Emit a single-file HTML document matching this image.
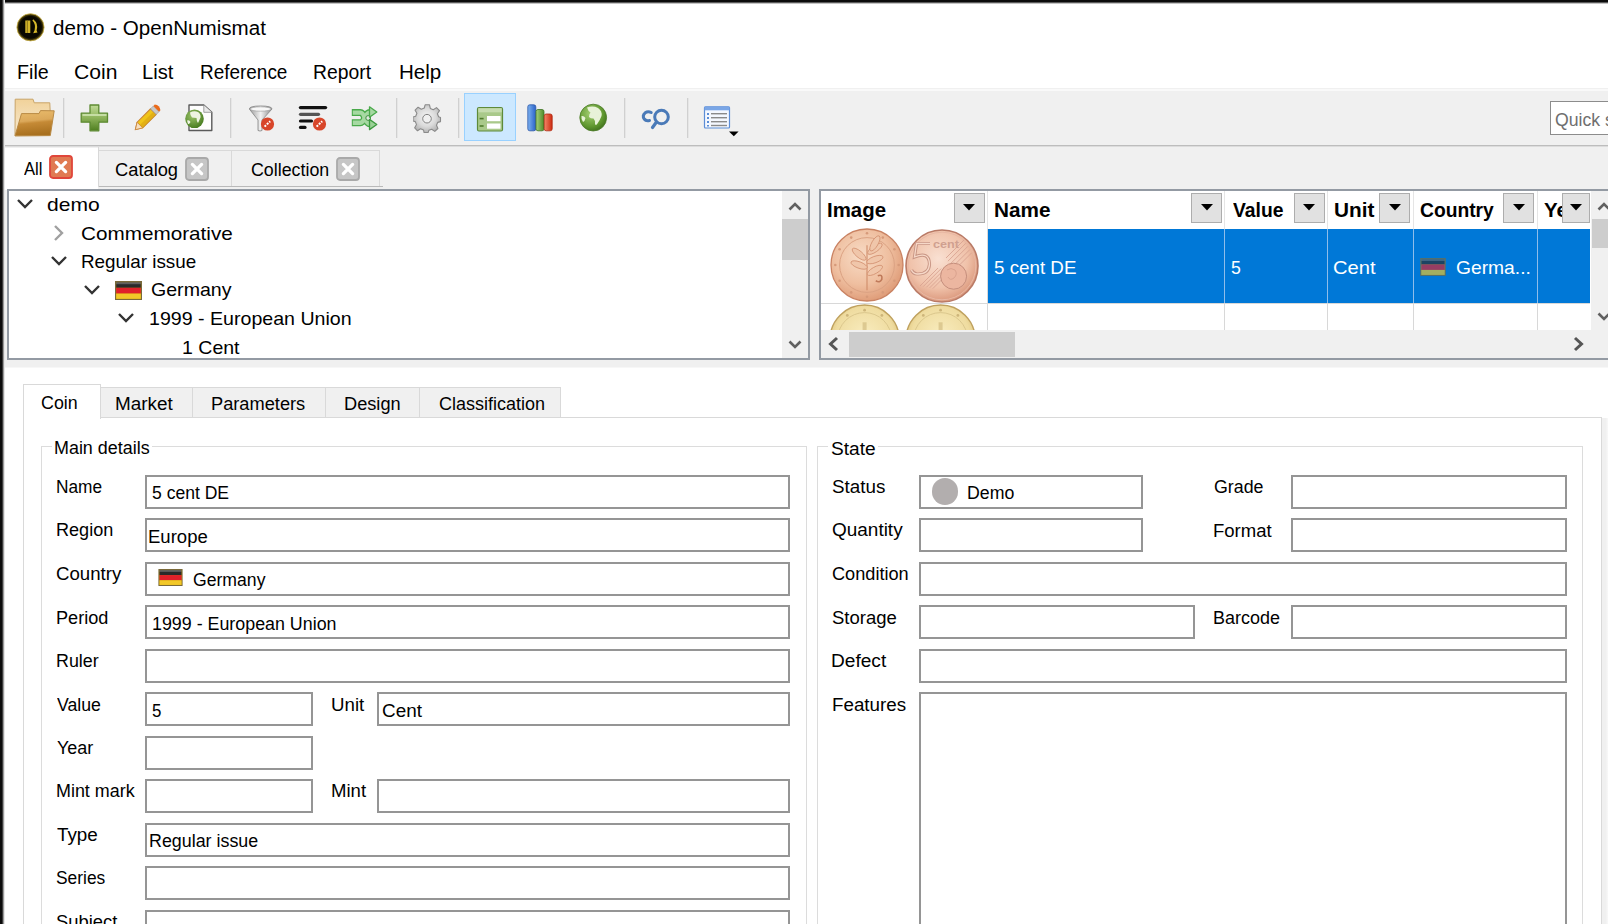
<!DOCTYPE html><html><head><meta charset="utf-8"><title>demo - OpenNumismat</title><style>
html,body{margin:0;padding:0;}body{width:1608px;height:924px;position:relative;overflow:hidden;background:#fff;font-family:"Liberation Sans",sans-serif;}
.t{position:absolute;white-space:nowrap;line-height:normal;transform-origin:0 0;}
</style></head><body>
<div style="position:absolute;left:0px;top:0px;width:1608px;height:88px;background:#fff"></div>
<div style="position:absolute;left:0px;top:88px;width:1608px;height:1px;background:#f0f0f0"></div>
<div style="position:absolute;left:0px;top:89px;width:1608px;height:2px;background:#f9f9f9"></div>
<div style="position:absolute;left:0px;top:91px;width:1608px;height:54px;background:#f0f0f0"></div>
<div style="position:absolute;left:0px;top:145px;width:1608px;height:1px;background:#bdbdbd"></div>
<div style="position:absolute;left:0px;top:146px;width:1608px;height:1px;background:#dcdcdc"></div>
<div style="position:absolute;left:0px;top:147px;width:1608px;height:221px;background:#f0f0f0"></div>
<div style="position:absolute;left:0px;top:367px;width:1608px;height:1px;background:#f7f7f7"></div>
<div style="position:absolute;left:0px;top:368px;width:1608px;height:556px;background:#fff"></div>
<svg style="position:absolute;left:16px;top:13px" width="29" height="29" viewBox="0 0 29 29">
<defs><radialGradient id="lg" cx="50%" cy="50%" r="50%"><stop offset="80%" stop-color="#0a0800"/><stop offset="100%" stop-color="#6b5a10"/></radialGradient></defs>
<circle cx="14.5" cy="14.3" r="13.6" fill="url(#lg)" stroke="#c9b04a" stroke-width="0.8"/>
<rect x="9.3" y="7.5" width="5" height="12.5" fill="#d4b62a"/>
<rect x="10.8" y="7.5" width="1" height="12.5" fill="#8a7418"/>
<path d="M17.2 6.2 Q22.8 10.5 20.6 17.4 L21.5 19.6 L17.2 20.2 L18.6 17.2 Q20 11 16.4 7.4 Z" fill="#d4b62a"/>
</svg>
<div style="position:absolute;left:63px;top:98px;width:1px;height:40px;background:#d0d0d0"></div>
<div style="position:absolute;left:64px;top:98px;width:1px;height:40px;background:#e6e6e6"></div>
<div style="position:absolute;left:230px;top:98px;width:1px;height:40px;background:#d0d0d0"></div>
<div style="position:absolute;left:231px;top:98px;width:1px;height:40px;background:#e6e6e6"></div>
<div style="position:absolute;left:396px;top:98px;width:1px;height:40px;background:#d0d0d0"></div>
<div style="position:absolute;left:397px;top:98px;width:1px;height:40px;background:#e6e6e6"></div>
<div style="position:absolute;left:458px;top:98px;width:1px;height:40px;background:#d0d0d0"></div>
<div style="position:absolute;left:459px;top:98px;width:1px;height:40px;background:#e6e6e6"></div>
<div style="position:absolute;left:624px;top:98px;width:1px;height:40px;background:#d0d0d0"></div>
<div style="position:absolute;left:625px;top:98px;width:1px;height:40px;background:#e6e6e6"></div>
<div style="position:absolute;left:687px;top:98px;width:1px;height:40px;background:#d0d0d0"></div>
<div style="position:absolute;left:688px;top:98px;width:1px;height:40px;background:#e6e6e6"></div>
<div style="position:absolute;left:464px;top:93px;width:52px;height:48px;background:#cce8ff;border:1px solid #99d1ff;box-sizing:border-box"></div>
<svg style="position:absolute;left:12px;top:95px" width="44" height="44" viewBox="0 0 44 44">
<defs>
<linearGradient id="fb" x1="0" y1="0" x2="0" y2="1"><stop offset="0" stop-color="#f1d29a"/><stop offset="1" stop-color="#f7ead2"/></linearGradient>
<linearGradient id="ff" x1="0" y1="0" x2="0.15" y2="1"><stop offset="0" stop-color="#eabc6c"/><stop offset="0.45" stop-color="#dba85a"/><stop offset="0.55" stop-color="#c58a36"/><stop offset="1" stop-color="#a8701f"/></linearGradient>
</defs>
<path d="M3.2 4.2 L21 4.2 L22.2 7.8 L37.8 7.8 L38.3 19 L37 40.5 L3 40.8 Z" fill="url(#fb)" stroke="#c9a468" stroke-width="1"/>
<path d="M9.5 18.6 L27 18.6 L28.5 15.6 L42.2 15.8 L38.3 40.6 L3 40.8 Z" fill="url(#ff)" stroke="#b98a45" stroke-width="1"/>
</svg>
<svg style="position:absolute;left:80px;top:104px" width="29" height="28" viewBox="0 0 29 28">
<defs><linearGradient id="pg" x1="0" y1="0" x2="0" y2="1"><stop offset="0" stop-color="#c1dc98"/><stop offset="0.5" stop-color="#8db35a"/><stop offset="1" stop-color="#4f7f20"/></linearGradient></defs>
<path d="M10 1 L18.8 1 L18.8 9.2 L27.5 9.2 L27.5 18.2 L18.8 18.2 L18.8 26.8 L10 26.8 L10 18.2 L1.2 18.2 L1.2 9.2 L10 9.2 Z" fill="url(#pg)" stroke="#5d8a32" stroke-width="1.3" stroke-linejoin="round"/>
<rect x="2.5" y="10" width="24" height="2" fill="#d9ebbd" opacity="0.7"/>
</svg>
<svg style="position:absolute;left:130px;top:102px" width="34" height="32" viewBox="0 0 34 32">
<g transform="rotate(-45 17 16)">
<path d="M0.5 16 L7 12 L26 12 L26 20 L7 20 Z" fill="#f0c419" stroke="#c9833a" stroke-width="1"/>
<path d="M0.5 16 L7 12 L7 20 Z" fill="#f6dfc0" stroke="#c9833a" stroke-width="0.8"/>
<rect x="7" y="16" width="19" height="4" fill="#d9a410" opacity="0.6"/>
<rect x="26" y="12" width="4" height="8" fill="#c8c8c8" stroke="#9a9a9a" stroke-width="0.6"/>
<path d="M30 12 L32 12 Q35 16 32 20 L30 20 Z" fill="#ea6a1a"/>
</g></svg>
<svg style="position:absolute;left:183px;top:102px" width="32" height="31" viewBox="0 0 32 31">
<defs><radialGradient id="gg" cx="40%" cy="35%" r="65%"><stop offset="0" stop-color="#9cc46a"/><stop offset="1" stop-color="#4a7e22"/></radialGradient></defs>
<path d="M6 3 L20.8 3 L28.8 10.3 L28.8 28.5 L6 28.5 Z" fill="#fdfdfd" stroke="#5a5a5a" stroke-width="1.4" stroke-linejoin="round"/>
<path d="M20.8 3 L20.8 10.3 L28.8 10.3" fill="#e8e8e8" stroke="#8a8a8a" stroke-width="0.8"/>
<circle cx="11.5" cy="16.8" r="9.3" fill="url(#gg)"/>
<path d="M7 10.5 Q11 8.5 15 10 Q18 12 17.5 15.5 Q16 19 15 21 Q13.5 19 13.5 16 Q11 15.5 9 15.5 Q7 13 7 10.5 Z" fill="#eef4e2"/>
<path d="M4 18.5 Q6.5 17.5 7.5 20 Q6.5 22.5 5 22 Z" fill="#eef4e2"/>
</svg>
<svg style="position:absolute;left:246px;top:103px" width="32" height="32" viewBox="0 0 32 32">
<defs><linearGradient id="fn" x1="0" y1="0" x2="1" y2="0"><stop offset="0" stop-color="#9a9a9a"/><stop offset="0.5" stop-color="#f2f2f2"/><stop offset="1" stop-color="#8a8a8a"/></linearGradient></defs>
<path d="M3.3 6 Q3.3 3 14.6 3 Q26 3 26 6 L16 17 L16 27.5 Q14 28.5 12 27.5 L12 17 Z" fill="url(#fn)" stroke="#8c8c8c" stroke-width="0.9"/>
<ellipse cx="14.6" cy="6" rx="10.5" ry="2.2" fill="#f8f8f8" stroke="#a0a0a0" stroke-width="0.7"/>
<circle cx="21.5" cy="21" r="6.6" fill="#d8462a"/>
<path d="M18.6 23.6 L24.2 18.2" stroke="#fff" stroke-width="2" stroke-dasharray="2 1.2"/>
</svg>
<svg style="position:absolute;left:296px;top:103px" width="34" height="32" viewBox="0 0 34 32">
<path d="M4.5 4.6 L29.5 4.6" stroke="#111" stroke-width="3.4" stroke-linecap="round"/>
<path d="M4.5 11.3 L22.5 11.3" stroke="#555" stroke-width="3.2" stroke-linecap="round"/>
<path d="M4.5 18 L15.5 18" stroke="#111" stroke-width="3.2" stroke-linecap="round"/>
<path d="M4.5 24.4 L9 24.4" stroke="#111" stroke-width="3.2" stroke-linecap="round"/>
<circle cx="23.5" cy="21" r="6.6" fill="#d8462a"/>
<path d="M20.6 23.6 L26.2 18.2" stroke="#fff" stroke-width="2" stroke-dasharray="2 1.2"/>
</svg>
<svg style="position:absolute;left:349px;top:103px" width="32" height="30" viewBox="0 0 32 30">
<g fill="none" stroke-linecap="butt">
<path d="M2.8 9.6 L11.5 9.6 C16 9.6 16 20.8 20.5 20.8 L22 20.8" stroke="#49a94a" stroke-width="7"/>
<path d="M2.8 19.8 L11.5 19.8 C16 19.8 16 9.6 20.5 9.6 L22 9.6" stroke="#49a94a" stroke-width="7"/>
<path d="M3.8 9.6 L11.5 9.6 C16 9.6 16 20.8 20.5 20.8 L22 20.8" stroke="#a6d9a2" stroke-width="4.4"/>
<path d="M3.8 19.8 L11.5 19.8 C16 19.8 16 9.6 20.5 9.6 L22 9.6" stroke="#a6d9a2" stroke-width="4.4"/>
</g>
<circle cx="19.2" cy="15" r="2.4" fill="#dfe8df" stroke="#3f8f3f" stroke-width="1"/>
<path d="M20.5 3.8 L27.8 9 L20.5 14.2 Z" fill="#a6d9a2" stroke="#49a94a" stroke-width="1.3" stroke-linejoin="round"/>
<path d="M20.5 16.4 L27.8 21.5 L20.5 26.6 Z" fill="#9ad196" stroke="#3d9a40" stroke-width="1.3" stroke-linejoin="round"/>
</svg>
<svg style="position:absolute;left:413px;top:104px" width="29" height="29" viewBox="0 0 29 29">
<defs><radialGradient id="gr" cx="50%" cy="45%" r="55%"><stop offset="0" stop-color="#f6f6f6"/><stop offset="0.6" stop-color="#dadada"/><stop offset="1" stop-color="#b4b4b4"/></radialGradient></defs>
<g transform="translate(14.3 14)">
<path d="M-2.2 -13.2 L2.2 -13.2 L3 -9.6 L6 -8.3 L9.2 -10.4 L12.2 -7.4 L10.1 -4.2 L11.3 -1.2 L13.2 -0.6 L13.2 3.6 L10.4 4.4 L9.2 7.3 L10.6 10.5 L7.5 13.4 L4.4 11.2 L1.6 12.3 L0.8 14.6 L-3.2 14.6 L-3.8 12 L-6.8 10.8 L-9.8 12.8 L-12.6 9.8 L-10.8 6.6 L-12 3.6 L-14.4 3 L-14.4 -1 L-11.6 -1.8 L-10.4 -4.8 L-12.2 -7.8 L-9.2 -10.8 L-6 -8.8 L-3 -10 Z" fill="url(#gr)" stroke="#8a8a8a" stroke-width="1.1" stroke-linejoin="round"/>
<circle cx="-0.3" cy="0.7" r="4.3" fill="#f0f0f0" stroke="#777" stroke-width="0.9"/>
</g></svg>
<svg style="position:absolute;left:476px;top:106px" width="28" height="27" viewBox="0 0 28 27">
<rect x="1.5" y="1.5" width="25" height="23.5" rx="1.5" fill="#a9c98a" stroke="#5e8a3a" stroke-width="1.2"/>
<rect x="2.3" y="2.3" width="23.4" height="4" fill="#c6dcaf"/>
<rect x="11" y="10" width="13.5" height="5.2" fill="#fff"/>
<rect x="11" y="17.5" width="13.5" height="5.2" fill="#fff"/>
<rect x="3.6" y="11.8" width="4" height="1.6" fill="#4e7a2c"/>
<rect x="3.6" y="19.2" width="4" height="1.6" fill="#4e7a2c"/>
</svg>
<svg style="position:absolute;left:526px;top:103px" width="30" height="30" viewBox="0 0 30 30">
<defs>
<linearGradient id="b1" x1="0" x2="1"><stop offset="0" stop-color="#7db2f0"/><stop offset="1" stop-color="#2a62c8"/></linearGradient>
<linearGradient id="b2" x1="0" x2="1"><stop offset="0" stop-color="#a8d27a"/><stop offset="1" stop-color="#4e8a2a"/></linearGradient>
<linearGradient id="b3" x1="0" x2="1"><stop offset="0" stop-color="#f4876a"/><stop offset="1" stop-color="#cc2a10"/></linearGradient>
</defs>
<rect x="1.8" y="1.8" width="8" height="26" rx="2" fill="url(#b1)" stroke="#2a56a8" stroke-width="0.8"/>
<rect x="10" y="6.5" width="8" height="21.3" rx="2" fill="url(#b2)" stroke="#3e7422" stroke-width="0.8"/>
<rect x="18.2" y="11" width="8" height="16.8" rx="2" fill="url(#b3)" stroke="#b02a10" stroke-width="0.8"/>
</svg>
<svg style="position:absolute;left:578px;top:103px" width="30" height="30" viewBox="0 0 30 30">
<defs><radialGradient id="gl" cx="40%" cy="35%" r="70%"><stop offset="0" stop-color="#a4cf72"/><stop offset="0.7" stop-color="#5e962e"/><stop offset="1" stop-color="#3f6f1c"/></radialGradient></defs>
<circle cx="15.2" cy="14.6" r="13.4" fill="url(#gl)" stroke="#4a7a26" stroke-width="0.8"/>
<path d="M9 4.5 Q15 2.5 20 5 Q24.5 8 23.5 13 Q22 17 19.5 20.5 Q18 23 17 21 Q17.5 17.5 15.5 15.5 Q12.5 15.5 11 14 Q11 11 12.5 9.5 Q10 8 9 4.5 Z" fill="#e8f2d8"/>
<path d="M3.5 13 Q6 12.5 7.5 15 Q7 18 5 19 Q3 16.5 3.5 13 Z" fill="#e8f2d8"/>
</svg>
<svg style="position:absolute;left:640px;top:106px" width="32" height="26" viewBox="0 0 32 26">
<path d="M11.2 6.5 Q8 4.8 5.2 6.8 Q2 9.5 4.2 13 Q6 15.5 9.5 14.5" fill="none" stroke="#4a7ab8" stroke-width="3" stroke-linecap="round"/>
<circle cx="21.5" cy="11" r="6.8" fill="none" stroke="#4a7ab8" stroke-width="3"/>
<path d="M16.5 16 L12.5 21.5" stroke="#4a7ab8" stroke-width="3.2" stroke-linecap="round"/>
</svg>
<svg style="position:absolute;left:702px;top:104px" width="40" height="34" viewBox="0 0 40 34">
<rect x="2.5" y="2.8" width="25" height="21.2" rx="1" fill="#f4f8ff" stroke="#5b8dd6" stroke-width="1.2"/>
<rect x="2.5" y="2.8" width="25" height="3.5" fill="#7aa6e6"/>
<g fill="#5b8dd6"><rect x="5" y="9" width="2" height="2"/><rect x="5" y="13" width="2" height="2"/><rect x="5" y="17" width="2" height="2"/><rect x="5" y="21" width="2" height="1.5"/></g>
<g fill="#8a8a8a"><rect x="9" y="9" width="16" height="1.4"/><rect x="9" y="13" width="16" height="1.4"/><rect x="9" y="17" width="16" height="1.4"/><rect x="9" y="20.8" width="16" height="1.4"/></g>
<path d="M27 27.6 L36.6 27.6 L31.8 32.3 Z" fill="#000"/>
</svg>
<div style="position:absolute;left:1550px;top:101px;width:70px;height:34px;background:#fff;border:1.5px solid #8c8c8c;box-sizing:border-box"></div>
<div style="position:absolute;left:4px;top:148px;width:94px;height:42px;background:#fff"></div>
<div style="position:absolute;left:98px;top:147px;width:1px;height:40px;background:#d8d8d8"></div>
<div style="position:absolute;left:99px;top:151px;width:133px;height:35px;background:#f0f0f0"></div>
<div style="position:absolute;left:99px;top:150px;width:281px;height:1px;background:#d9d9d9"></div>
<div style="position:absolute;left:231px;top:151px;width:1px;height:35px;background:#d9d9d9"></div>
<div style="position:absolute;left:379px;top:151px;width:1px;height:35px;background:#d9d9d9"></div>
<div style="position:absolute;left:99px;top:186px;width:284px;height:1px;background:#b9b9b9"></div>
<div style="position:absolute;left:232px;top:151px;width:147px;height:35px;background:#f0f0f0"></div>
<svg style="position:absolute;left:49px;top:155px" width="24" height="24" viewBox="0 0 24 24">
<rect x="1" y="1" width="22" height="22" rx="3" fill="#e07a52" stroke="#e0463a" stroke-width="1.8"/>
<path d="M7.4 7.4 L16.6 16.6 M16.6 7.4 L7.4 16.6" stroke="#fff" stroke-width="3.3" stroke-linecap="round"/>
</svg>
<svg style="position:absolute;left:185px;top:157px" width="24" height="24" viewBox="0 0 24 24">
<rect x="1" y="1" width="22" height="22" rx="3" fill="#c6c6c6" stroke="#a9a9a9" stroke-width="1.8"/>
<path d="M7.4 7.4 L16.6 16.6 M16.6 7.4 L7.4 16.6" stroke="#fff" stroke-width="3.3" stroke-linecap="round"/>
</svg>
<svg style="position:absolute;left:336px;top:157px" width="24" height="24" viewBox="0 0 24 24">
<rect x="1" y="1" width="22" height="22" rx="3" fill="#c6c6c6" stroke="#a9a9a9" stroke-width="1.8"/>
<path d="M7.4 7.4 L16.6 16.6 M16.6 7.4 L7.4 16.6" stroke="#fff" stroke-width="3.3" stroke-linecap="round"/>
</svg>
<div style="position:absolute;left:7px;top:189px;width:803px;height:171px;background:#fff;border:2px solid #939aa3;box-sizing:border-box"></div>
<div style="position:absolute;left:782px;top:191px;width:26px;height:167px;background:#f0f0f0"></div>
<div style="position:absolute;left:782px;top:219px;width:26px;height:41px;background:#cdcdcd"></div>
<svg style="position:absolute;left:788px;top:200px" width="14" height="12" viewBox="0 0 14 12"><path d="M1.5 9.5 L7 4 L12.5 9.5" fill="none" stroke="#606060" stroke-width="2.6"/></svg>
<svg style="position:absolute;left:788px;top:339px" width="14" height="12" viewBox="0 0 14 12"><path d="M1.5 2.5 L7 8 L12.5 2.5" fill="none" stroke="#606060" stroke-width="2.6"/></svg>
<svg style="position:absolute;left:16px;top:197px" width="18" height="14" viewBox="0 0 18 14"><path d="M2 3 L9 10 L16 3" fill="none" stroke="#333" stroke-width="2.4"/></svg>
<svg style="position:absolute;left:52px;top:224px" width="14" height="18" viewBox="0 0 14 18"><path d="M3 2 L10 9 L3 16" fill="none" stroke="#a0a0a0" stroke-width="2.4"/></svg>
<svg style="position:absolute;left:50px;top:254px" width="18" height="14" viewBox="0 0 18 14"><path d="M2 3 L9 10 L16 3" fill="none" stroke="#333" stroke-width="2.4"/></svg>
<svg style="position:absolute;left:83px;top:283px" width="18" height="14" viewBox="0 0 18 14"><path d="M2 3 L9 10 L16 3" fill="none" stroke="#333" stroke-width="2.4"/></svg>
<svg style="position:absolute;left:117px;top:311px" width="18" height="14" viewBox="0 0 18 14"><path d="M2 3 L9 10 L16 3" fill="none" stroke="#333" stroke-width="2.4"/></svg>
<svg style="position:absolute;left:114.5px;top:281px" width="27" height="19" viewBox="0 0 27 19">
<rect x="0.6" y="0.6" width="25.8" height="17.8" fill="#c9a000" stroke="#7a6a3a" stroke-width="1.2"/>
<rect x="1.2" y="1.2" width="24.6" height="5.6" fill="#2a2a2a"/>
<rect x="1.2" y="6.8" width="24.6" height="5.8" fill="#e0202a"/>
<rect x="1.2" y="12.6" width="24.6" height="5.2" fill="#f2c828"/>
<rect x="1.2" y="1.2" width="24.6" height="2" fill="#fff" opacity="0.25"/>
</svg>
<div style="position:absolute;left:819px;top:189px;width:800px;height:171px;background:#fff;border:2px solid #939aa3;box-sizing:border-box"></div>
<div style="position:absolute;left:987px;top:191px;width:1px;height:38px;background:#e5e5e5"></div>
<div style="position:absolute;left:1224px;top:191px;width:1px;height:38px;background:#e5e5e5"></div>
<div style="position:absolute;left:1327px;top:191px;width:1px;height:38px;background:#e5e5e5"></div>
<div style="position:absolute;left:1413px;top:191px;width:1px;height:38px;background:#e5e5e5"></div>
<div style="position:absolute;left:1537px;top:191px;width:1px;height:38px;background:#e5e5e5"></div>
<div style="position:absolute;left:988px;top:229px;width:602px;height:74px;background:#0078d7"></div>
<div style="position:absolute;left:821px;top:303px;width:769px;height:1px;background:#d8d8d8"></div>
<div style="position:absolute;left:987px;top:229px;width:1px;height:74px;background:#d8d8d8"></div>
<div style="position:absolute;left:987px;top:304px;width:1px;height:26px;background:#d8d8d8"></div>
<div style="position:absolute;left:1224px;top:229px;width:1px;height:74px;background:#8fbdea"></div>
<div style="position:absolute;left:1224px;top:304px;width:1px;height:26px;background:#d8d8d8"></div>
<div style="position:absolute;left:1327px;top:229px;width:1px;height:74px;background:#8fbdea"></div>
<div style="position:absolute;left:1327px;top:304px;width:1px;height:26px;background:#d8d8d8"></div>
<div style="position:absolute;left:1413px;top:229px;width:1px;height:74px;background:#8fbdea"></div>
<div style="position:absolute;left:1413px;top:304px;width:1px;height:26px;background:#d8d8d8"></div>
<div style="position:absolute;left:1537px;top:229px;width:1px;height:74px;background:#8fbdea"></div>
<div style="position:absolute;left:1537px;top:304px;width:1px;height:26px;background:#d8d8d8"></div>
<div style="position:absolute;left:953.7px;top:192.5px;width:31px;height:30.5px;background:#e1e1e1;border:1px solid #adadad;box-sizing:border-box"></div>
<svg style="position:absolute;left:963.2px;top:204px" width="12" height="7" viewBox="0 0 12 7"><path d="M0 0 L12 0 L6 6.5 Z" fill="#000"/></svg>
<div style="position:absolute;left:1191px;top:192.5px;width:31px;height:30.5px;background:#e1e1e1;border:1px solid #adadad;box-sizing:border-box"></div>
<svg style="position:absolute;left:1200.5px;top:204px" width="12" height="7" viewBox="0 0 12 7"><path d="M0 0 L12 0 L6 6.5 Z" fill="#000"/></svg>
<div style="position:absolute;left:1293.7px;top:192.5px;width:31px;height:30.5px;background:#e1e1e1;border:1px solid #adadad;box-sizing:border-box"></div>
<svg style="position:absolute;left:1303.2px;top:204px" width="12" height="7" viewBox="0 0 12 7"><path d="M0 0 L12 0 L6 6.5 Z" fill="#000"/></svg>
<div style="position:absolute;left:1379px;top:192.5px;width:31px;height:30.5px;background:#e1e1e1;border:1px solid #adadad;box-sizing:border-box"></div>
<svg style="position:absolute;left:1388.5px;top:204px" width="12" height="7" viewBox="0 0 12 7"><path d="M0 0 L12 0 L6 6.5 Z" fill="#000"/></svg>
<div style="position:absolute;left:1503.4px;top:192.5px;width:31px;height:30.5px;background:#e1e1e1;border:1px solid #adadad;box-sizing:border-box"></div>
<svg style="position:absolute;left:1512.9px;top:204px" width="12" height="7" viewBox="0 0 12 7"><path d="M0 0 L12 0 L6 6.5 Z" fill="#000"/></svg>
<svg style="position:absolute;left:828.8px;top:227.2px" width="76.0" height="76.0" viewBox="0 0 76.0 76.0"><defs><radialGradient id="c866265c" cx="42%" cy="38%" r="65%"><stop offset="0" stop-color="#f8dcc6"/><stop offset="0.6" stop-color="#efbfa0"/><stop offset="1" stop-color="#de9a76"/></radialGradient></defs>
<circle cx="38" cy="38" r="36" fill="url(#c866265c)" stroke="#c98262" stroke-width="1.3"/>
<circle cx="38" cy="38" r="27.4" fill="none" stroke="#dba283" stroke-width="1"/>
<circle cx="38.0" cy="6.3" r="1.3" fill="#d69a7a"/><circle cx="53.8" cy="10.6" r="1.3" fill="#d69a7a"/><circle cx="65.4" cy="22.2" r="1.3" fill="#d69a7a"/><circle cx="69.7" cy="38.0" r="1.3" fill="#d69a7a"/><circle cx="65.4" cy="53.8" r="1.3" fill="#d69a7a"/><circle cx="53.8" cy="65.4" r="1.3" fill="#d69a7a"/><circle cx="38.0" cy="69.7" r="1.3" fill="#d69a7a"/><circle cx="22.2" cy="65.4" r="1.3" fill="#d69a7a"/><circle cx="10.6" cy="53.8" r="1.3" fill="#d69a7a"/><circle cx="6.3" cy="38.0" r="1.3" fill="#d69a7a"/><circle cx="10.6" cy="22.2" r="1.3" fill="#d69a7a"/><circle cx="22.2" cy="10.6" r="1.3" fill="#d69a7a"/>
<path d="M38 63.2 L38 18.2" stroke="#cf8c6a" stroke-width="1.1"/>
<ellipse cx="45.9" cy="21.8" rx="8.6" ry="3.2" transform="rotate(-35 45.9 21.8)" fill="#f0c6aa" stroke="#d39272" stroke-width="0.8"/><ellipse cx="30.1" cy="27.2" rx="8.6" ry="3.2" transform="rotate(-140 30.1 27.2)" fill="#f0c6aa" stroke="#d39272" stroke-width="0.8"/><ellipse cx="45.9" cy="32.6" rx="8.6" ry="3.2" transform="rotate(-20 45.9 32.6)" fill="#f0c6aa" stroke="#d39272" stroke-width="0.8"/><ellipse cx="30.1" cy="38.0" rx="8.6" ry="3.2" transform="rotate(-160 30.1 38.0)" fill="#f0c6aa" stroke="#d39272" stroke-width="0.8"/><ellipse cx="45.9" cy="43.4" rx="8.6" ry="3.2" transform="rotate(-30 45.9 43.4)" fill="#f0c6aa" stroke="#d39272" stroke-width="0.8"/><ellipse cx="45.9" cy="16.4" rx="8.6" ry="3.2" transform="rotate(-60 45.9 16.4)" fill="#f0c6aa" stroke="#d39272" stroke-width="0.8"/>
<path d="M48.8 48.8 q5 -2 4 3.5 q-2 4 -6 1.5" stroke="#c07a5a" stroke-width="1.6" fill="none"/></svg>
<svg style="position:absolute;left:904.2px;top:227.8px" width="76.0" height="76.0" viewBox="0 0 76.0 76.0"><defs><radialGradient id="c942265c" cx="45%" cy="40%" r="62%"><stop offset="0" stop-color="#f9e0d2"/><stop offset="0.65" stop-color="#f0c2aa"/><stop offset="1" stop-color="#d99478"/></radialGradient></defs>
<circle cx="38" cy="38" r="36" fill="url(#c942265c)" stroke="#b97a66" stroke-width="1.6"/>
<circle cx="38" cy="38" r="33.8" fill="none" stroke="#e8b8a4" stroke-width="1"/>
<path d="M16.0 58.0 L34.0 40.0" stroke="#d9a492" stroke-width="0.9"/><path d="M42.0 30.0 L60.0 12.0" stroke="#d9a492" stroke-width="0.9"/><path d="M19.2 58.6 L37.2 40.6" stroke="#d9a492" stroke-width="0.9"/><path d="M43.9 33.2 L61.9 15.2" stroke="#d9a492" stroke-width="0.9"/><path d="M22.4 59.3 L40.4 41.3" stroke="#d9a492" stroke-width="0.9"/><path d="M45.8 36.4 L63.8 18.4" stroke="#d9a492" stroke-width="0.9"/><path d="M25.6 59.9 L43.6 41.9" stroke="#d9a492" stroke-width="0.9"/><path d="M47.8 39.6 L65.8 21.6" stroke="#d9a492" stroke-width="0.9"/><path d="M28.8 60.6 L46.8 42.6" stroke="#d9a492" stroke-width="0.9"/><path d="M49.7 42.8 L67.7 24.8" stroke="#d9a492" stroke-width="0.9"/>
<path d="M26 15.5 L12.5 15.5 L10.5 29 Q25 23 25.5 36 Q25 46.5 13 46 Q9 45.5 7.5 42" fill="none" stroke="#c89584" stroke-width="3.2"/>
<path d="M26 15.5 L12.5 15.5 L10.5 29 Q25 23 25.5 36 Q25 46.5 13 46 Q9 45.5 7.5 42" fill="none" stroke="#f6d8c8" stroke-width="1.3"/>
<text x="29" y="20" font-family="Liberation Sans" font-size="10" font-weight="bold" fill="#d0a090" textLength="26" lengthAdjust="spacingAndGlyphs">cent</text>
<circle cx="49.6" cy="48.2" r="13" fill="#ecb6a0" stroke="#c58e7c" stroke-width="1"/>
<path d="M43 42 q4 -3 8 0 q3 4 -1 8 q-4 3 -6 -1" fill="none" stroke="#d8a08c" stroke-width="0.9"/></svg>
<div style="position:absolute;left:820px;top:304px;width:166px;height:26px;overflow:hidden"><svg style="position:absolute;left:8.4px;top:-0.6px" width="73.2" height="73.2" viewBox="0 0 73.2 73.2"><defs><radialGradient id="c865340g" cx="50%" cy="45%" r="60%"><stop offset="0" stop-color="#f9edc0"/><stop offset="0.7" stop-color="#efdca0"/><stop offset="1" stop-color="#d8bb6e"/></radialGradient></defs>
<circle cx="36.6" cy="36.6" r="34.6" fill="url(#c865340g)" stroke="#bfa15e" stroke-width="1.4"/>
<circle cx="36.6" cy="36.6" r="27.0" fill="none" stroke="#d8c48a" stroke-width="0.9"/>
<g fill="#cdb57a"><circle cx="36.6" cy="7.2" r="1.4"/><circle cx="19.3" cy="12.4" r="1.4"/><circle cx="53.9" cy="12.4" r="1.4"/><rect x="34.6" y="19.3" width="4" height="8" opacity="0.6"/></g></svg><svg style="position:absolute;left:84.4px;top:-0.6px" width="73.2" height="73.2" viewBox="0 0 73.2 73.2"><defs><radialGradient id="c941340g" cx="50%" cy="45%" r="60%"><stop offset="0" stop-color="#f9edc0"/><stop offset="0.7" stop-color="#efdca0"/><stop offset="1" stop-color="#d8bb6e"/></radialGradient></defs>
<circle cx="36.6" cy="36.6" r="34.6" fill="url(#c941340g)" stroke="#bfa15e" stroke-width="1.4"/>
<circle cx="36.6" cy="36.6" r="27.0" fill="none" stroke="#d8c48a" stroke-width="0.9"/>
<g fill="#cdb57a"><circle cx="36.6" cy="7.2" r="1.4"/><circle cx="19.3" cy="12.4" r="1.4"/><circle cx="53.9" cy="12.4" r="1.4"/><rect x="34.6" y="19.3" width="4" height="8" opacity="0.6"/></g></svg></div>
<svg style="position:absolute;left:1419.5px;top:258px" width="26" height="18" viewBox="0 0 27 19">
<rect x="0.6" y="0.6" width="25.8" height="17.8" fill="#c9a000" stroke="#7a6a3a" stroke-width="1.2"/>
<rect x="1.2" y="1.2" width="24.6" height="5.6" fill="#2a2a2a"/>
<rect x="1.2" y="6.8" width="24.6" height="5.8" fill="#e0202a"/>
<rect x="1.2" y="12.6" width="24.6" height="5.2" fill="#f2c828"/>
<rect x="1.2" y="1.2" width="24.6" height="2" fill="#fff" opacity="0.25"/>
</svg>
<div style="position:absolute;left:1419.5px;top:258px;width:26px;height:18px;background:rgba(0,120,215,0.33)"></div>
<div style="position:absolute;left:1591px;top:191px;width:17px;height:139px;background:#f0f0f0"></div>
<div style="position:absolute;left:1592px;top:219px;width:16px;height:29px;background:#cdcdcd"></div>
<svg style="position:absolute;left:1597px;top:200px" width="14" height="12" viewBox="0 0 14 12"><path d="M1.5 9.5 L7 4 L12.5 9.5" fill="none" stroke="#606060" stroke-width="2.6"/></svg>
<svg style="position:absolute;left:1597px;top:311px" width="14" height="12" viewBox="0 0 14 12"><path d="M1.5 2.5 L7 8 L12.5 2.5" fill="none" stroke="#606060" stroke-width="2.6"/></svg>
<div style="position:absolute;left:821px;top:330px;width:787px;height:28px;background:#f0f0f0"></div>
<div style="position:absolute;left:849px;top:331.5px;width:166px;height:25px;background:#cdcdcd"></div>
<svg style="position:absolute;left:826px;top:336px" width="15" height="16" viewBox="0 0 15 16"><path d="M11 2 L4.5 8 L11 14" fill="none" stroke="#555" stroke-width="3"/></svg>
<svg style="position:absolute;left:1570px;top:336px" width="15" height="16" viewBox="0 0 15 16"><path d="M5 2 L11.5 8 L5 14" fill="none" stroke="#555" stroke-width="3"/></svg>
<div style="position:absolute;left:1602px;top:418px;width:6px;height:506px;background:linear-gradient(90deg,#f0f0f0 0,#f0f0f0 60%,#f8f8f8 100%)"></div>
<div style="position:absolute;left:23px;top:417px;width:1579px;height:600px;background:#fff;border:1px solid #d9d9d9;box-sizing:border-box"></div>
<div style="position:absolute;left:100px;top:387px;width:461px;height:31px;background:#f0f0f0;border:1px solid #d9d9d9;box-sizing:border-box"></div>
<div style="position:absolute;left:192px;top:388px;width:1px;height:30px;background:#d9d9d9"></div>
<div style="position:absolute;left:325px;top:388px;width:1px;height:30px;background:#d9d9d9"></div>
<div style="position:absolute;left:419px;top:388px;width:1px;height:30px;background:#d9d9d9"></div>
<div style="position:absolute;left:23px;top:384px;width:78px;height:35px;background:#fff;border:1px solid #d9d9d9;border-bottom:none;box-sizing:border-box"></div>
<div style="position:absolute;left:41px;top:446px;width:766px;height:500px;border:1px solid #dcdcdc;box-sizing:border-box"></div>
<div style="position:absolute;left:52px;top:440px;width:100px;height:14px;background:#fff"></div>
<div style="position:absolute;left:817px;top:446px;width:766px;height:500px;border:1px solid #dcdcdc;box-sizing:border-box"></div>
<div style="position:absolute;left:828px;top:440px;width:50px;height:14px;background:#fff"></div>
<div style="position:absolute;left:145px;top:475px;width:645px;height:34px;background:#fff;border:2px solid #959595;box-sizing:border-box"></div>
<div style="position:absolute;left:145px;top:518px;width:645px;height:34px;background:#fff;border:2px solid #959595;box-sizing:border-box"></div>
<div style="position:absolute;left:145px;top:562px;width:645px;height:34px;background:#fff;border:2px solid #959595;box-sizing:border-box"></div>
<div style="position:absolute;left:145px;top:605px;width:645px;height:34px;background:#fff;border:2px solid #959595;box-sizing:border-box"></div>
<div style="position:absolute;left:145px;top:649px;width:645px;height:34px;background:#fff;border:2px solid #959595;box-sizing:border-box"></div>
<div style="position:absolute;left:145px;top:692px;width:168px;height:34px;background:#fff;border:2px solid #959595;box-sizing:border-box"></div>
<div style="position:absolute;left:377px;top:692px;width:413px;height:34px;background:#fff;border:2px solid #959595;box-sizing:border-box"></div>
<div style="position:absolute;left:145px;top:736px;width:168px;height:34px;background:#fff;border:2px solid #959595;box-sizing:border-box"></div>
<div style="position:absolute;left:145px;top:779px;width:168px;height:34px;background:#fff;border:2px solid #959595;box-sizing:border-box"></div>
<div style="position:absolute;left:377px;top:779px;width:413px;height:34px;background:#fff;border:2px solid #959595;box-sizing:border-box"></div>
<div style="position:absolute;left:145px;top:823px;width:645px;height:34px;background:#fff;border:2px solid #959595;box-sizing:border-box"></div>
<div style="position:absolute;left:145px;top:866px;width:645px;height:34px;background:#fff;border:2px solid #959595;box-sizing:border-box"></div>
<div style="position:absolute;left:145px;top:910px;width:645px;height:34px;background:#fff;border:2px solid #959595;box-sizing:border-box"></div>
<svg style="position:absolute;left:156.5px;top:569px" width="27" height="17" viewBox="0 0 27 19">
<rect x="0.6" y="0.6" width="25.8" height="17.8" fill="#c9a000" stroke="#7a6a3a" stroke-width="1.2"/>
<rect x="1.2" y="1.2" width="24.6" height="5.6" fill="#2a2a2a"/>
<rect x="1.2" y="6.8" width="24.6" height="5.8" fill="#e0202a"/>
<rect x="1.2" y="12.6" width="24.6" height="5.2" fill="#f2c828"/>
<rect x="1.2" y="1.2" width="24.6" height="2" fill="#fff" opacity="0.25"/>
</svg>
<div style="position:absolute;left:919px;top:475px;width:224px;height:34px;background:#fff;border:2px solid #959595;box-sizing:border-box"></div>
<div style="position:absolute;left:919px;top:518px;width:224px;height:34px;background:#fff;border:2px solid #959595;box-sizing:border-box"></div>
<div style="position:absolute;left:919px;top:562px;width:648px;height:34px;background:#fff;border:2px solid #959595;box-sizing:border-box"></div>
<div style="position:absolute;left:919px;top:605px;width:276px;height:34px;background:#fff;border:2px solid #959595;box-sizing:border-box"></div>
<div style="position:absolute;left:919px;top:649px;width:648px;height:34px;background:#fff;border:2px solid #959595;box-sizing:border-box"></div>
<div style="position:absolute;left:919px;top:692px;width:648px;height:300px;background:#fff;border:2px solid #959595;box-sizing:border-box"></div>
<div style="position:absolute;left:1291px;top:475px;width:276px;height:34px;background:#fff;border:2px solid #959595;box-sizing:border-box"></div>
<div style="position:absolute;left:1291px;top:518px;width:276px;height:34px;background:#fff;border:2px solid #959595;box-sizing:border-box"></div>
<div style="position:absolute;left:1291px;top:605px;width:276px;height:34px;background:#fff;border:2px solid #959595;box-sizing:border-box"></div>
<div style="position:absolute;left:931.5px;top:478px;width:26.5px;height:26.5px;border-radius:50%;background:#b2aeae"></div>
<span class="t" style="left:52.58px;top:16.90px;font-size:20px;color:#000;transform:scaleX(1.0297);">demo - OpenNumismat</span>
<span class="t" style="left:16.93px;top:61.20px;font-size:20px;color:#000;transform:scaleX(0.9831);">File</span>
<span class="t" style="left:73.84px;top:61.20px;font-size:20px;color:#000;transform:scaleX(1.0563);">Coin</span>
<span class="t" style="left:141.69px;top:61.20px;font-size:20px;color:#000;transform:scaleX(1.0079);">List</span>
<span class="t" style="left:199.78px;top:61.20px;font-size:20px;color:#000;transform:scaleX(0.9471);">Reference</span>
<span class="t" style="left:313.45px;top:61.20px;font-size:20px;color:#000;transform:scaleX(0.9662);">Report</span>
<span class="t" style="left:399.15px;top:61.20px;font-size:20px;color:#000;transform:scaleX(1.0282);">Help</span>
<span class="t" style="left:1555.02px;top:109.91px;font-size:18px;color:#6f6f6f;transform:scaleX(0.9810);">Quick s</span>
<span class="t" style="left:23.60px;top:158.51px;font-size:18px;color:#000;transform:scaleX(0.9253);">All</span>
<span class="t" style="left:115.09px;top:160.31px;font-size:18px;color:#000;transform:scaleX(1.0161);">Catalog</span>
<span class="t" style="left:250.91px;top:160.31px;font-size:18px;color:#000;transform:scaleX(0.9892);">Collection</span>
<span class="t" style="left:47.22px;top:194.21px;font-size:19px;color:#000;transform:scaleX(1.1072);">demo</span>
<span class="t" style="left:81.02px;top:222.81px;font-size:19px;color:#000;transform:scaleX(1.0893);">Commemorative</span>
<span class="t" style="left:80.51px;top:251.31px;font-size:19px;color:#000;transform:scaleX(0.9921);">Regular issue</span>
<span class="t" style="left:151.47px;top:279.31px;font-size:19px;color:#000;transform:scaleX(1.0306);">Germany</span>
<span class="t" style="left:148.56px;top:308.11px;font-size:19px;color:#000;transform:scaleX(1.0314);">1999 - European Union</span>
<span class="t" style="left:181.56px;top:336.81px;font-size:19px;color:#000;transform:scaleX(1.0275);">1 Cent</span>
<span class="t" style="left:827.24px;top:198.95px;font-size:19.5px;color:#000;font-weight:bold;transform:scaleX(1.0475);">Image</span>
<span class="t" style="left:994.22px;top:198.95px;font-size:19.5px;color:#000;font-weight:bold;transform:scaleX(1.0632);">Name</span>
<span class="t" style="left:1232.90px;top:198.95px;font-size:19.5px;color:#000;font-weight:bold;transform:scaleX(0.9900);">Value</span>
<span class="t" style="left:1334.33px;top:198.95px;font-size:19.5px;color:#000;font-weight:bold;transform:scaleX(1.0652);">Unit</span>
<span class="t" style="left:1419.81px;top:198.95px;font-size:19.5px;color:#000;font-weight:bold;transform:scaleX(0.9878);">Country</span>
<span class="t" style="left:1544.18px;top:198.95px;font-size:19.5px;color:#000;font-weight:bold;transform:scaleX(1.0536);">Ye</span>
<span class="t" style="left:994.09px;top:257.06px;font-size:18.5px;color:#fff;transform:scaleX(1.0151);">5 cent DE</span>
<span class="t" style="left:1231.33px;top:257.06px;font-size:18.5px;color:#fff;transform:scaleX(0.9551);">5</span>
<span class="t" style="left:1332.52px;top:257.06px;font-size:18.5px;color:#fff;transform:scaleX(1.0882);">Cent</span>
<span class="t" style="left:1455.66px;top:257.06px;font-size:18.5px;color:#fff;transform:scaleX(1.0401);">Germa...</span>
<span class="t" style="left:40.58px;top:392.86px;font-size:17.5px;color:#000;transform:scaleX(1.0188);">Coin</span>
<span class="t" style="left:114.99px;top:394.46px;font-size:17.5px;color:#000;transform:scaleX(1.0803);">Market</span>
<span class="t" style="left:211.34px;top:394.46px;font-size:17.5px;color:#000;transform:scaleX(1.0418);">Parameters</span>
<span class="t" style="left:343.54px;top:394.46px;font-size:17.5px;color:#000;transform:scaleX(1.0396);">Design</span>
<span class="t" style="left:438.78px;top:394.46px;font-size:17.5px;color:#000;transform:scaleX(1.0281);">Classification</span>
<span class="t" style="left:53.77px;top:437.76px;font-size:17.5px;color:#000;transform:scaleX(1.0237);">Main details</span>
<span class="t" style="left:830.63px;top:438.56px;font-size:17.5px;color:#000;transform:scaleX(1.0931);">State</span>
<span class="t" style="left:55.62px;top:476.96px;font-size:17.5px;color:#000;transform:scaleX(0.9877);">Name</span>
<span class="t" style="left:55.55px;top:520.46px;font-size:17.5px;color:#000;transform:scaleX(1.0336);">Region</span>
<span class="t" style="left:56.15px;top:563.96px;font-size:17.5px;color:#000;transform:scaleX(1.0640);">Country</span>
<span class="t" style="left:55.55px;top:607.96px;font-size:17.5px;color:#000;transform:scaleX(1.0363);">Period</span>
<span class="t" style="left:55.57px;top:651.46px;font-size:17.5px;color:#000;transform:scaleX(1.0201);">Ruler</span>
<span class="t" style="left:57.00px;top:694.96px;font-size:17.5px;color:#000;transform:scaleX(1.0111);">Value</span>
<span class="t" style="left:56.69px;top:738.46px;font-size:17.5px;color:#000;transform:scaleX(1.0278);">Year</span>
<span class="t" style="left:55.57px;top:781.46px;font-size:17.5px;color:#000;transform:scaleX(1.0231);">Mint mark</span>
<span class="t" style="left:56.68px;top:824.96px;font-size:17.5px;color:#000;transform:scaleX(1.0757);">Type</span>
<span class="t" style="left:56.31px;top:868.46px;font-size:17.5px;color:#000;transform:scaleX(0.9927);">Series</span>
<span class="t" style="left:56.26px;top:911.96px;font-size:17.5px;color:#000;transform:scaleX(1.0502);">Subject</span>
<span class="t" style="left:331.41px;top:694.96px;font-size:17.5px;color:#000;transform:scaleX(1.0686);">Unit</span>
<span class="t" style="left:331.32px;top:781.46px;font-size:17.5px;color:#000;transform:scaleX(1.0602);">Mint</span>
<span class="t" style="left:151.50px;top:483.16px;font-size:17.5px;color:#000;transform:scaleX(1.0030);">5 cent DE</span>
<span class="t" style="left:148.02px;top:526.66px;font-size:17.5px;color:#000;transform:scaleX(1.0590);">Europe</span>
<span class="t" style="left:193.19px;top:570.16px;font-size:17.5px;color:#000;transform:scaleX(1.0068);">Germany</span>
<span class="t" style="left:151.67px;top:614.36px;font-size:17.5px;color:#000;transform:scaleX(1.0194);">1999 - European Union</span>
<span class="t" style="left:152.33px;top:700.66px;font-size:17.5px;color:#000;transform:scaleX(0.9639);">5</span>
<span class="t" style="left:382.14px;top:701.16px;font-size:17.5px;color:#000;transform:scaleX(1.0802);">Cent</span>
<span class="t" style="left:149.07px;top:831.16px;font-size:17.5px;color:#000;transform:scaleX(1.0203);">Regular issue</span>
<span class="t" style="left:832.25px;top:476.96px;font-size:17.5px;color:#000;transform:scaleX(1.0752);">Status</span>
<span class="t" style="left:832.13px;top:520.46px;font-size:17.5px;color:#000;transform:scaleX(1.0835);">Quantity</span>
<span class="t" style="left:832.17px;top:563.96px;font-size:17.5px;color:#000;transform:scaleX(1.0374);">Condition</span>
<span class="t" style="left:832.26px;top:607.96px;font-size:17.5px;color:#000;transform:scaleX(1.0575);">Storage</span>
<span class="t" style="left:831.47px;top:650.96px;font-size:17.5px;color:#000;transform:scaleX(1.0913);">Defect</span>
<span class="t" style="left:831.50px;top:694.96px;font-size:17.5px;color:#000;transform:scaleX(1.0729);">Features</span>
<span class="t" style="left:1213.89px;top:476.66px;font-size:17.5px;color:#000;transform:scaleX(1.0169);">Grade</span>
<span class="t" style="left:1213.22px;top:520.66px;font-size:17.5px;color:#000;transform:scaleX(1.0582);">Format</span>
<span class="t" style="left:1213.26px;top:607.56px;font-size:17.5px;color:#000;transform:scaleX(1.0262);">Barcode</span>
<span class="t" style="left:967.28px;top:483.36px;font-size:17.5px;color:#000;transform:scaleX(1.0124);">Demo</span>
<div style="position:absolute;left:1562px;top:192.5px;width:28px;height:30.5px;background:#e1e1e1;border:1px solid #adadad;box-sizing:border-box"></div>
<svg style="position:absolute;left:1570px;top:204px" width="12" height="7" viewBox="0 0 12 7"><path d="M0 0 L12 0 L6 6.5 Z" fill="#000"/></svg>
<div style="position:absolute;left:0px;top:0px;width:1608px;height:2px;background:#0b0b0b"></div>
<div style="position:absolute;left:0px;top:2px;width:1608px;height:1px;background:#5a5a5a"></div>
<div style="position:absolute;left:0px;top:3px;width:1608px;height:1px;background:#c4c4c4"></div>
<div style="position:absolute;left:0px;top:0px;width:2px;height:924px;background:#0b0b0b"></div>
<div style="position:absolute;left:2px;top:0px;width:1px;height:924px;background:#3a3a3a"></div>
<div style="position:absolute;left:3px;top:0px;width:1px;height:924px;background:#9a9a9a"></div>
<div style="position:absolute;left:4px;top:0px;width:1px;height:924px;background:#e6e6e6"></div>
</body></html>
